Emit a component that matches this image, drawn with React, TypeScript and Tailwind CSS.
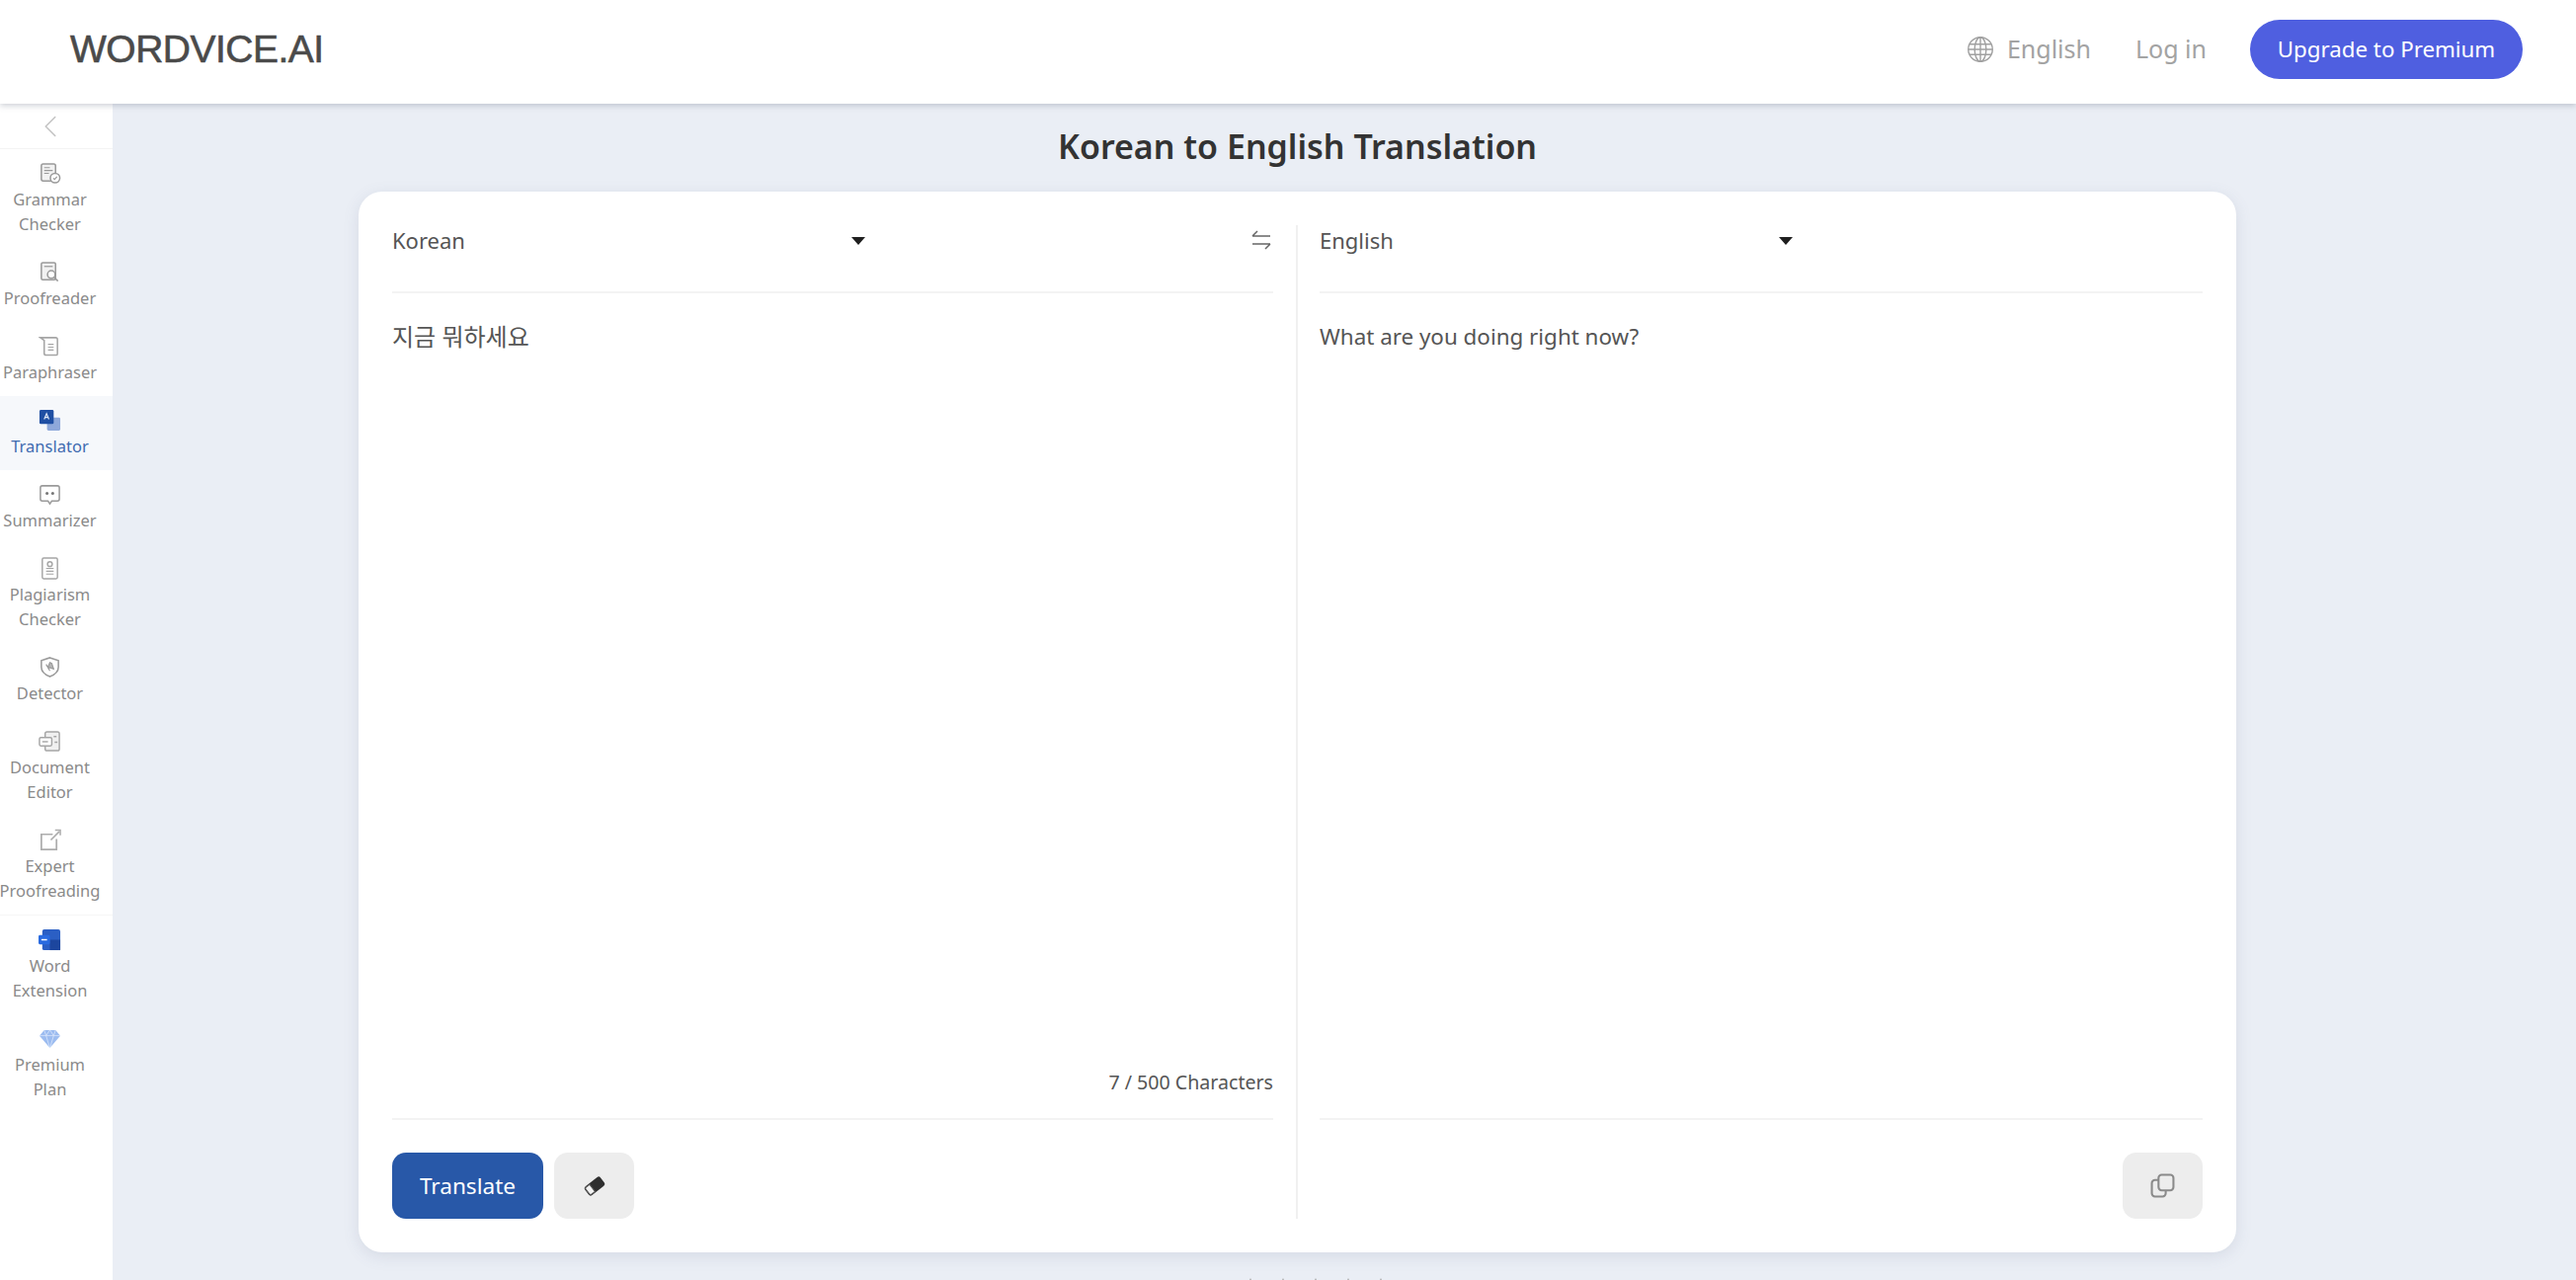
import { ChevronLeft } from "lucide-react";
import type { ReactNode } from "react";

const font = { fontFamily: '"Noto Sans", "Noto Sans CJK KR", sans-serif' };

const ic = "h-[23px] w-[23px]";

function GrammarIcon() {
  return (
    <svg viewBox="0 0 24 24" className={ic} fill="none" stroke="#9a9a9a" strokeWidth="1.6">
      <rect x="3" y="2" width="15" height="18" rx="2" fill="#f2f2f2" />
      <path d="M6 6h6M6 9h9M6 12h5" strokeWidth="1.3" />
      <circle cx="17.5" cy="17" r="5" fill="#fff" />
      <path d="M15.5 17l1.5 1.5 2.5-3" strokeWidth="1.2" />
    </svg>
  );
}

function ProofIcon() {
  return (
    <svg viewBox="0 0 24 24" className={ic} fill="none" stroke="#9a9a9a" strokeWidth="1.6">
      <rect x="3" y="2" width="15" height="18" rx="1.5" fill="#f2f2f2" />
      <path d="M6 6h9" strokeWidth="1.3" />
      <circle cx="13.5" cy="14.5" r="4" fill="#fff" />
      <path d="M16.5 17.5l4 4" />
    </svg>
  );
}

function ParaphraseIcon() {
  return (
    <svg viewBox="0 0 24 24" className={ic} fill="none" stroke="#a5a5a5" strokeWidth="1.6">
      <path d="M2 3h16a2 2 0 0 1 2 2v15a1.5 1.5 0 0 1-1.5 1.5H8A2 2 0 0 1 6 19.5V6z" />
      <path d="M10 10h6M10 13h6M10 16h6" strokeWidth="1.2" />
    </svg>
  );
}

function TranslateIcon() {
  return (
    <svg viewBox="0 0 24 24" className={ic}>
      <rect x="9" y="9" width="14" height="14" rx="1.5" fill="#8ea8da" />
      <rect x="1" y="1" width="15" height="15" rx="1.5" fill="#1f4fa3" />
      <path d="M6 11l2.5-6 2.5 6M7 9h3" stroke="#dfe8f7" strokeWidth="1.2" fill="none" />
    </svg>
  );
}

function SummaryIcon() {
  return (
    <svg viewBox="0 0 24 24" className={ic} fill="none" stroke="#9a9a9a" strokeWidth="1.6">
      <path d="M4 3h16a2 2 0 0 1 2 2v12a2 2 0 0 1-2 2h-6l-2 3-2-3H4a2 2 0 0 1-2-2V5a2 2 0 0 1 2-2z" />
      <circle cx="9" cy="11" r="1.6" fill="#777" stroke="none" />
      <circle cx="15" cy="11" r="1.6" fill="#777" stroke="none" />
    </svg>
  );
}

function PlagiarismIcon() {
  return (
    <svg viewBox="0 0 24 24" className={ic} fill="none" stroke="#a5a5a5" strokeWidth="1.5">
      <rect x="4" y="1" width="16" height="22" rx="1.5" />
      <circle cx="12" cy="7.5" r="2.5" />
      <path d="M8 12h8M8 15h8M8 18h8" strokeWidth="1.3" />
    </svg>
  );
}

function ShieldIcon() {
  return (
    <svg viewBox="0 0 24 24" className={ic} fill="none" stroke="#9a9a9a" strokeWidth="1.6">
      <path d="M12 2l9 3v7c0 5-4 8-9 10-5-2-9-5-9-10V5z" />
      <path d="M8 9l4 7M12 7l-2 5 6 2-2-6z" fill="#b5b5b5" strokeWidth="1.2" />
    </svg>
  );
}

function DocIcon() {
  return (
    <svg viewBox="0 0 24 24" className={ic} fill="none" stroke="#a5a5a5" strokeWidth="1.5">
      <rect x="7" y="2" width="15" height="20" rx="2" fill="#f0f0f0" />
      <rect x="1" y="8" width="13" height="9" rx="1.5" fill="#fff" />
      <path d="M4 12.5h6" />
      <path d="M16 7h3M17 13h3" />
    </svg>
  );
}

function ExpertIcon() {
  return (
    <svg viewBox="0 0 24 24" className={ic} fill="none" stroke="#adadad" strokeWidth="1.8">
      <path d="M15 6H3v16h16v-11" />
      <path d="M13 12l9-9" />
      <path d="M17.5 1.5H23v5.5" strokeWidth="1.6" />
    </svg>
  );
}

function WordIcon() {
  return (
    <svg viewBox="0 0 24 24" className={ic}>
      <rect x="4" y="1" width="19" height="22" rx="2" fill="#2b5fc4" />
      <rect x="12" y="12" width="11" height="11" fill="#1c469e" />
      <rect x="0" y="7" width="12" height="10" rx="1.5" fill="#2a6be0" />
      <path d="M3 12h6" stroke="#fff" strokeWidth="1.5" />
    </svg>
  );
}

function GemIcon() {
  return (
    <svg viewBox="0 0 24 24" className={ic}>
      <path d="M6 3h12l5 6-11 13L1 9z" fill="#9cbcf0" />
      <path d="M1 9h22M8 9l4 13 4-13M6 3l2 6 4-6 4 6 2-6" stroke="#dce8fb" strokeWidth="0.8" fill="none" />
    </svg>
  );
}

function GlobeIcon() {
  return (
    <svg viewBox="0 0 24 24" className="h-[28px] w-[28px]" fill="none" stroke="#a0a0a0" strokeWidth="1.2">
      <circle cx="12" cy="12" r="10.5" />
      <ellipse cx="12" cy="12" rx="5" ry="10.5" />
      <path d="M12 1.5v21M2.5 7.5h19M1.5 12h21M2.5 16.5h19" />
    </svg>
  );
}

function EraserIcon() {
  return (
    <svg viewBox="0 0 24 24" className="h-[24px] w-[24px]">
      <g transform="rotate(-38 12 12)">
        <rect x="2" y="6.5" width="20" height="11" rx="2.5" fill="#2f2f2f" />
        <path d="M9 7.5H4.5A1.5 1.5 0 0 0 3 9v6a1.5 1.5 0 0 0 1.5 1.5H9z" fill="#f2f2f2" stroke="#555" strokeWidth="1" />
      </g>
    </svg>
  );
}

function CopyIcon() {
  return (
    <svg viewBox="0 0 24 24" className="h-[25px] w-[25px]" fill="none" stroke="#8a8a8a" strokeWidth="2">
      <rect x="8" y="1.5" width="14.5" height="15" rx="3" />
      <path d="M8 6.5H4.5a3 3 0 0 0-3 3V19.5a3 3 0 0 0 3 3h7.5a3 3 0 0 0 3-3v-3" />
    </svg>
  );
}

function Star() {
  return (
    <svg viewBox="0 0 20 20" className="h-[20px] w-[20px]" fill="#a8a8a8">
      <path d="M10 0l3 6.5 7 .8-5.200 4.700 1.400 7L10 15.500 3.800 19l1.400-7L0 7.300l7-.8z" />
    </svg>
  );
}

const items: { icon: ReactNode; lines: string[]; active?: boolean; split?: boolean }[] = [
  { icon: <GrammarIcon />, lines: ["Grammar", "Checker"] },
  { icon: <ProofIcon />, lines: ["Proofreader"] },
  { icon: <ParaphraseIcon />, lines: ["Paraphraser"] },
  { icon: <TranslateIcon />, lines: ["Translator"], active: true },
  { icon: <SummaryIcon />, lines: ["Summarizer"] },
  { icon: <PlagiarismIcon />, lines: ["Plagiarism", "Checker"] },
  { icon: <ShieldIcon />, lines: ["Detector"] },
  { icon: <DocIcon />, lines: ["Document", "Editor"] },
  { icon: <ExpertIcon />, lines: ["Expert", "Proofreading"], split: true },
  { icon: <WordIcon />, lines: ["Word", "Extension"] },
  { icon: <GemIcon />, lines: ["Premium", "Plan"] },
];

function Sidebar() {
  return (
    <aside className="w-[114px] shrink-0 bg-white">
      <div className="flex h-[46px] items-center justify-center border-b border-[#f3f3f3] pr-[13px]">
        <ChevronLeft size={38} strokeWidth={1} className="text-[#c4c4c4]" />
      </div>
      {items.map((item) => (
        <div
          key={item.lines[0]}
          className={`flex flex-col items-center pb-[12px] pr-[13px] pt-[13px] ${item.active ? "bg-[#f6f8fb]" : ""} ${item.split ? "border-b border-[#f6f6f6]" : ""}`}
        >
          <div className="flex h-[25px] items-start justify-center">{item.icon}</div>
          {item.lines.map((line) => (
            <div
              key={line}
              className={`whitespace-nowrap text-[16.5px] leading-[25px] ${item.active ? "text-[#3f6bb0]" : "text-[#8a8a8a]"}`}
            >
              {line}
            </div>
          ))}
        </div>
      ))}
    </aside>
  );
}

function Header() {
  return (
    <header className="relative z-10 flex h-[105px] shrink-0 items-center justify-between bg-white pb-[6px] pl-[71px] pr-[54px] shadow-[0_2px_6px_rgba(90,100,120,0.3)]">
      <div
        className="text-[39px] leading-none tracking-[-0.5px] text-[#4a4a4a] [-webkit-text-stroke:0.6px_#4a4a4a]"
        style={{ fontFamily: '"Liberation Sans", sans-serif' }}
      >
        WORDVICE.AI
      </div>
      <div className="flex items-center">
        <GlobeIcon />
        <span className="ml-[13px] text-[25px] text-[#a3a3a3]">English</span>
        <span className="ml-[45px] text-[25px] text-[#a3a3a3]">Log in</span>
        <button className="ml-[44px] h-[60px] w-[276px] rounded-full bg-[#4f5fe0] text-[22.3px] text-white">
          Upgrade to Premium
        </button>
      </div>
    </header>
  );
}

function Caret() {
  return <div className="mt-[2px] h-0 w-0 border-x-[7px] border-t-[8px] border-x-transparent border-t-[#1f1f1f]" />;
}

export default function App() {
  return (
    <div className="flex h-[1296px] w-[2608px] flex-col overflow-hidden bg-[#eaeef5]" style={font}>
      <Header />
      <div className="flex min-h-0 flex-1">
        <Sidebar />
        <main className="ml-[249px] w-[1901px]">
          <h1 className="mt-[22px] h-[67px] text-center text-[34px] font-semibold leading-[42px] text-[#333]">
            Korean to English Translation
          </h1>
          <section className="flex h-[1074px] rounded-[24px] bg-white py-[34px] shadow-[0_4px_16px_rgba(100,110,140,0.15)]">
            <div className="flex w-[949px] shrink-0 flex-col pl-[34px] pr-[23px]">
              <div className="flex h-[69px] shrink-0 items-start justify-between border-b-2 border-[#f3f3f3]">
                <div className="flex w-[479px] items-center justify-between">
                  <span className="text-[22px] leading-[30px] text-[#555]">Korean</span>
                  <Caret />
                </div>
                <svg viewBox="0 0 24 24" className="mt-[3px] h-[24px] w-[24px]" fill="none" stroke="#666" strokeWidth="1.5">
                  <path d="M21 8H3M8 3L3 8M3 16h18M16 21l5-5" />
                </svg>
              </div>
              <p className="mt-[27px] flex-1 text-[24px] leading-[34px] text-[#555]">지금 뭐하세요</p>
              <div className="mb-[23px] text-right text-[19.6px] leading-[26px] text-[#555]">7 / 500 Characters</div>
              <div className="flex h-[102px] shrink-0 items-end gap-[11px] border-t-2 border-[#f3f3f3]">
                <button className="h-[67px] w-[153px] rounded-[14px] bg-[#2858a8] text-[22.6px] text-white">Translate</button>
                <button className="flex h-[67px] w-[81px] items-center justify-center rounded-[14px] bg-[#ededed]">
                  <EraserIcon />
                </button>
              </div>
            </div>
            <div className="flex min-w-0 flex-1 flex-col border-l-2 border-[#f0f0f0] pl-[22px] pr-[34px]">
              <div className="flex h-[69px] shrink-0 items-start border-b-2 border-[#f3f3f3]">
                <div className="flex w-[479px] items-center justify-between">
                  <span className="text-[22px] leading-[30px] text-[#555]">English</span>
                  <Caret />
                </div>
              </div>
              <p className="mt-[27px] flex-1 text-[22.4px] leading-[34px] text-[#555]">What are you doing right now?</p>
              <div className="flex h-[102px] shrink-0 items-end justify-end border-t-2 border-[#f3f3f3]">
                <button className="flex h-[67px] w-[81px] items-center justify-center rounded-[14px] bg-[#ededed]">
                  <CopyIcon />
                </button>
              </div>
            </div>
          </section>
          <div className="mt-[26px] flex justify-center gap-[13px] pl-[36px]">
            <Star />
            <Star />
            <Star />
            <Star />
            <Star />
          </div>
        </main>
      </div>
    </div>
  );
}
